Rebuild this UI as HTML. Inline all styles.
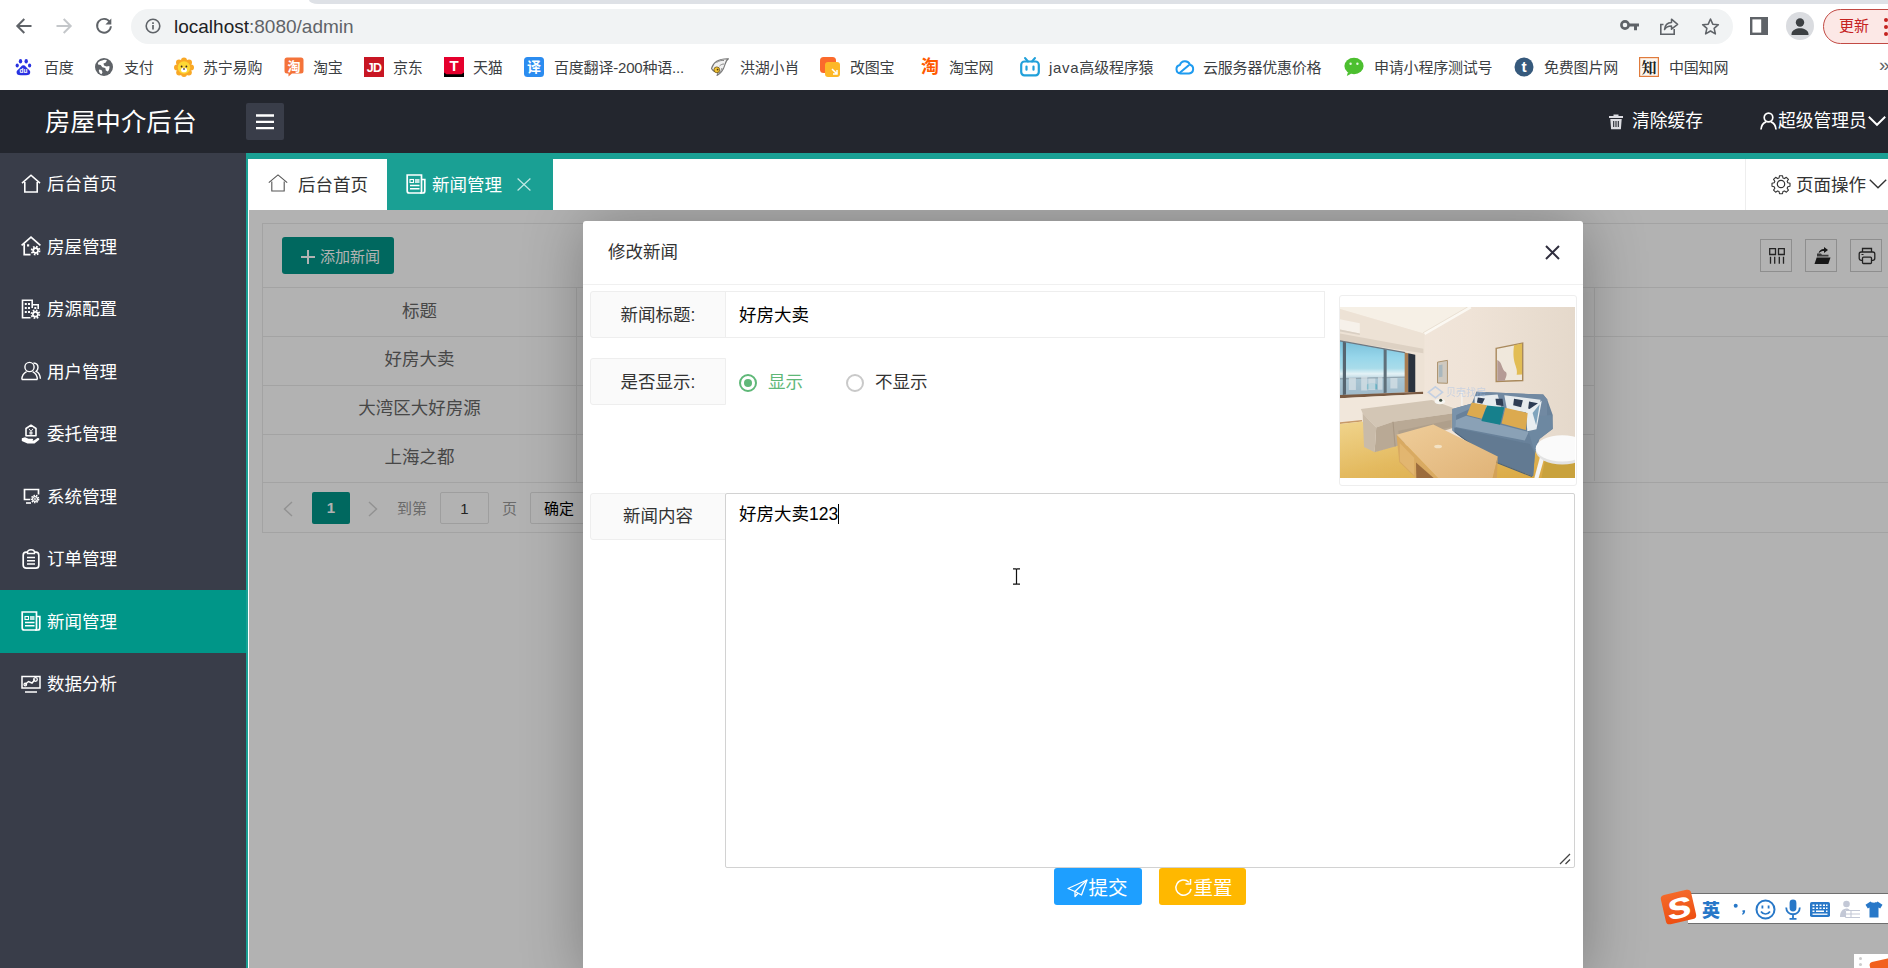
<!DOCTYPE html>
<html lang="zh-CN">
<head>
<meta charset="utf-8">
<title>房屋中介后台</title>
<style>
*{box-sizing:border-box;margin:0;padding:0}
html,body{width:1888px;height:968px;overflow:hidden;background:#fff}
body{position:relative;font-family:"Liberation Sans","Noto Sans CJK SC",sans-serif;font-size:17.5px;color:#333;line-height:1}
.abs{position:absolute}
svg{display:block;overflow:visible}
/* ---------- browser chrome ---------- */
#chrome{position:absolute;left:0;top:0;width:1888px;height:89px;background:#fff}
#tabstrip{position:absolute;left:309px;top:0;width:1579px;height:4px;background:#dee1e6;border-bottom-left-radius:9px 4px}
#urlbar{position:absolute;left:131px;top:9px;width:1602px;height:35px;border-radius:17.5px;background:#f1f3f4}
#url{position:absolute;left:174px;top:16.5px;font-size:19px;color:#202124;white-space:nowrap}
#url span{color:#5f6368}
.bm{position:absolute;top:59.7px;font-size:15px;color:#3c4043;white-space:nowrap;letter-spacing:-0.2px}
.bmi{position:absolute;top:56.7px;width:20px;height:20px}
#update{position:absolute;left:1823px;top:9px;width:90px;height:35px;border:1.5px solid #c24a44;border-radius:18px;background:#fce8e6;color:#c5221f;font-size:15px;padding:8px 0 0 15px}
/* ---------- app header ---------- */
#hdr{position:absolute;left:0;top:90px;width:1888px;height:62.5px;background:#23262e}
#logo{position:absolute;left:45px;top:19.5px;font-size:25.3px;color:#fff;white-space:nowrap}
#burger{position:absolute;left:246px;top:13px;width:38px;height:37px;background:#393d49;border-radius:2px}
.hr{position:absolute;top:23px;font-size:17.75px;color:#fff;white-space:nowrap}
/* ---------- sidebar ---------- */
#side{position:absolute;left:0;top:152.5px;width:246px;height:816px;background:#393d49}
.mi{position:absolute;left:0;width:246px;height:63px;color:#fff;font-size:17.5px}
.mi span{position:absolute;left:47px;top:23.5px;white-space:nowrap}
.mi svg{position:absolute;left:21px;top:21px;width:20px;height:20px}
.mi.on{background:#009688}
#tealv{position:absolute;left:246px;top:153px;width:2px;height:815px;background:#1aa094}
#tealh{position:absolute;left:246px;top:153px;width:1642px;height:6px;background:#1aa094}
/* ---------- tab bar ---------- */
#tabs{position:absolute;left:248px;top:159px;width:1640px;height:51px;background:#fff}
.tab{position:absolute;top:0;height:51px;font-size:17.5px;white-space:nowrap}
/* ---------- content ---------- */
#content{position:absolute;left:249px;top:210px;width:1639px;height:758px;background:#fff;overflow:hidden}
#card{position:absolute;left:13px;top:13px;width:1700px;height:310px;background:#fff;border:1px solid #eaeaea}
#shade{position:absolute;left:0;top:0;width:1640px;height:758px;background:rgba(0,0,0,.3)}
.hl{position:absolute;left:0;width:1700px;height:1px;background:#eaeaea}
.vl{position:absolute;width:1px;background:#eaeaea}
.tc{position:absolute;left:0;width:313px;text-align:center;font-size:17.5px;color:#666;white-space:nowrap}
.tb{position:absolute;top:15px;width:32px;height:33px;border:1px solid #ccc;padding:7px 6px 6px 7px}
/* ---------- modal ---------- */
#modal{position:absolute;left:334px;top:11px;width:1000px;height:760px;background:#fff;border-radius:3px;box-shadow:1px 1px 62px rgba(0,0,0,.3)}
#mtitle{position:absolute;left:0;top:0;width:1000px;height:64px;border-bottom:1px solid #f0f0f0;font-size:17.5px;color:#333;padding:22.5px 0 0 25px}
.lbl{position:absolute;left:7px;width:136px;height:47px;background:#fafafa;border:1px solid #eee;border-radius:3px 0 0 3px;font-size:17.5px;color:#333;text-align:center;padding-top:15px;white-space:nowrap}
.inp{position:absolute;border:1px solid #eee;background:#fff;font-size:17.5px;color:#000}
.btn{position:absolute;top:647px;height:37px;border-radius:3px;color:#fff;font-size:19.5px;white-space:nowrap}
</style>
</head>
<body>
<!-- ================= BROWSER CHROME ================= -->
<div id="chrome">
  <div id="tabstrip"></div>
  <div id="urlbar"></div>
  <!-- nav icons -->
  <svg class="abs" style="left:15px;top:16.600px" width="18" height="18" viewBox="0 0 18 18"><path d="M16.5 9H2.500M9.300 2L2.300 9l7 7" fill="none" stroke="#5f6368" stroke-width="2"/></svg>
  <svg class="abs" style="left:55px;top:16.600px" width="18" height="18" viewBox="0 0 18 18"><path d="M1.500 9h14M8.700 2L15.700 9l-7 7" fill="none" stroke="#c4c7ca" stroke-width="2"/></svg>
  <svg class="abs" style="left:94.500px;top:16.500px" width="18" height="18" viewBox="0 0 19 19"><path d="M15.6 5.2A7.3 7.3 0 1 0 16.8 9.8" fill="none" stroke="#5f6368" stroke-width="2"/><path d="M17.2 1.6v6.2H11z" fill="#5f6368"/></svg>
  <svg class="abs" style="left:145px;top:18px" width="16" height="16" viewBox="0 0 16 16"><circle cx="8" cy="8" r="6.8" fill="none" stroke="#5f6368" stroke-width="1.6"/><path d="M8 7v4.6M8 4.2v1.7" stroke="#5f6368" stroke-width="1.7"/></svg>
  <div id="url">localhost<span>:8080/admin</span></div>
  <!-- right icons -->
  <svg class="abs" style="left:1620px;top:19px" width="20" height="14" viewBox="0 0 20 14"><circle cx="5" cy="6" r="3.6" fill="none" stroke="#5f6368" stroke-width="2.6"/><path d="M8 4.6h11v3H17v3.6h-3V7.600H8z" fill="#5f6368"/></svg>
  <svg class="abs" style="left:1659px;top:16px" width="20" height="20" viewBox="0 0 20 20"><path d="M4.500 8.500H1.800V18.200H15.200V13" fill="none" stroke="#5f6368" stroke-width="1.6"/><path d="M5.500 13.500C6 9 9 6.800 12.500 6.600V3.200L18.600 8.300 12.500 13.200V9.900C9.500 9.900 7 11 5.500 13.500z" fill="none" stroke="#5f6368" stroke-width="1.500" stroke-linejoin="round"/></svg>
  <svg class="abs" style="left:1700.5px;top:16.5px" width="19" height="19" viewBox="0 0 21 21"><path d="M10.500 2.200l2.500 5.700 6.200.6-4.700 4.100 1.400 6.100-5.400-3.200-5.400 3.200 1.400-6.100L1.800 8.500l6.200-.6z" fill="none" stroke="#5f6368" stroke-width="1.700" stroke-linejoin="round"/></svg>
  <svg class="abs" style="left:1750px;top:17px" width="18" height="18" viewBox="0 0 18 18"><rect x="1.200" y="1.200" width="15.600" height="15.600" fill="none" stroke="#5f6368" stroke-width="2.400"/><rect x="11.200" y="1" width="6" height="16" fill="#5f6368"/></svg>
  <div class="abs" style="left:1786px;top:12px;width:28px;height:28px;border-radius:14px;background:#dadce0;overflow:hidden"><svg width="28" height="28" viewBox="0 0 28 28"><circle cx="14" cy="10.500" r="4.200" fill="#3c4043"/><path d="M5.500 22c0-4 5-5.800 8.500-5.800s8.500 1.800 8.500 5.800v1h-17z" fill="#3c4043"/></svg></div>
  <div id="update">更新</div>
  <div class="abs" style="left:1884px;top:18px;width:4px;height:4px;border-radius:2px;background:#c5221f;box-shadow:0 7px 0 #c5221f,0 14px 0 #c5221f"></div>
  <!-- bookmarks -->
  <svg class="bmi" style="left:14px" viewBox="0 0 20 20"><g fill="#2932e1"><ellipse cx="6.500" cy="4.200" rx="1.700" ry="2.300"/><ellipse cx="12.200" cy="4.200" rx="1.700" ry="2.300"/><ellipse cx="3.200" cy="8.500" rx="1.600" ry="2.100"/><ellipse cx="15.600" cy="8.500" rx="1.600" ry="2.100"/><path d="M9.400 8.200c2 0 2.600 2 4.300 3.500 1.800 1.500 3 2.400 2.400 4.500-.6 2-2.800 2-6.700 2s-6.200 0-6.700-2c-.6-2.100.7-3 2.400-4.500C6.800 10.200 7.400 8.200 9.400 8.200z"/></g><text x="9.400" y="16.400" font-size="6.500" font-weight="bold" fill="#fff" text-anchor="middle">du</text></svg>
  <div class="bm" style="left:44px">百度</div>
  <svg class="bmi" style="left:94px" viewBox="0 0 20 20"><circle cx="10" cy="10" r="9" fill="#5f6368"/><path d="M8 3.500c2-1 4-1 5 0l-1.500 2.200-2 .8.500 2 2.500 1 2.800-.4c.5 1.500 0 4-1.500 5.500l-2-1-.5-2.500-3-.8-1.600-2.200-2.600-.6C3.200 5.600 5.500 4 8 3.500z" fill="#fff"/><path d="M5 12.500l2.500.5 1 2.200-1 2C5.500 16.500 4.500 14.500 5 12.500z" fill="#fff"/></svg>
  <div class="bm" style="left:124px">支付</div>
  <svg class="bmi" style="left:174px" viewBox="0 0 20 20"><g fill="#f9a825"><circle cx="10" cy="3.600" r="3"/><circle cx="15" cy="5.600" r="3"/><circle cx="5" cy="5.600" r="3"/><circle cx="17" cy="10.500" r="3"/><circle cx="3" cy="10.500" r="3"/><circle cx="14.800" cy="15.500" r="3"/><circle cx="5.200" cy="15.500" r="3"/><circle cx="10" cy="17" r="3"/></g><circle cx="10" cy="10.500" r="6.200" fill="#fdd835"/><ellipse cx="10" cy="13" rx="3" ry="2.300" fill="#fff"/><circle cx="7.600" cy="9.500" r=".9" fill="#3e2723"/><circle cx="12.400" cy="9.500" r=".9" fill="#3e2723"/><ellipse cx="10" cy="12" rx="1.100" ry=".8" fill="#3e2723"/></svg>
  <div class="bm" style="left:203px">苏宁易购</div>
  <svg class="bmi" style="left:284px" viewBox="0 0 20 20"><path d="M3 0.500h14a2.500 2.500 0 0 1 2.500 2.500v11a2.500 2.500 0 0 1-2.500 2.500H8l-3.500 3v-3H3A2.500 2.500 0 0 1 .5 14V3A2.500 2.500 0 0 1 3 .5z" fill="#f4733a"/><text x="10" y="13.600" font-size="13" font-weight="bold" fill="#fff" text-anchor="middle">淘</text></svg>
  <div class="bm" style="left:313px">淘宝</div>
  <svg class="bmi" style="left:364px" viewBox="0 0 20 20"><rect width="20" height="20" fill="#c81623"/><text x="10" y="15" font-size="12.500" font-weight="bold" fill="#fff" text-anchor="middle" letter-spacing="-0.8">JD</text></svg>
  <div class="bm" style="left:393px">京东</div>
  <svg class="bmi" style="left:444px" viewBox="0 0 20 20"><rect width="20" height="20" fill="#e5002d"/><path d="M0 15.500l2.500 1.800h15L20 15.500V20H0z" fill="#000"/><text x="10" y="14.200" font-size="15" font-weight="bold" fill="#fff" text-anchor="middle">T</text></svg>
  <div class="bm" style="left:473px">天猫</div>
  <svg class="bmi" style="left:524px" viewBox="0 0 20 20"><rect width="20" height="20" rx="3.500" fill="#2b8cf0"/><text x="10" y="15" font-size="14" font-weight="bold" fill="#fff" text-anchor="middle">译</text></svg>
  <div class="bm" style="left:554px">百度翻译-200种语...</div>
  <svg class="bmi" style="left:710px" viewBox="0 0 20 20"><path d="M1.500 11.500C3 6 8 1.500 18.500 1.800c-2.500 1.500-3 3.700-3.800 6.500-1 3.500-3.200 7.500-7.700 10.200 1-2 1.200-3 .8-4-2.300.6-4.800-.3-6.300-3z" fill="#f1f1f1" stroke="#777" stroke-width="1.100" stroke-linejoin="round"/><path d="M6.500 5.500c2.200-1.700 5-2.300 7.500-2M9.500 9c1.500-1.500 3-2 4.500-2M12 11c-.5 2-1.500 3.500-3 5" fill="none" stroke="#888" stroke-width="1"/><circle cx="6.800" cy="12.800" r="2.900" fill="#f3c331" stroke="#6b5316" stroke-width=".8"/><circle cx="7.600" cy="12.600" r=".9" fill="#4a3a10"/></svg>
  <div class="bm" style="left:740px">洪湖小肖</div>
  <svg class="bmi" style="left:820px" viewBox="0 0 20 20"><rect x="0" y="0" width="16" height="16" rx="3.500" fill="#fb6a2c"/><rect x="5" y="5" width="15" height="15" rx="3" fill="#fdb827"/><path d="M12 12l5 5M17 13v4h-4" fill="none" stroke="#fff" stroke-width="1.500"/></svg>
  <div class="bm" style="left:850px">改图宝</div>
  <svg class="bmi" style="left:920px" viewBox="0 0 20 20"><text x="10" y="16" font-size="18" font-weight="bold" fill="#ff5a00" text-anchor="middle">淘</text></svg>
  <div class="bm" style="left:949px">淘宝网</div>
  <svg class="bmi" style="left:1020px" viewBox="0 0 20 20"><path d="M5 1l3 3.500M15 1l-3 3.500" stroke="#20a0da" stroke-width="2" stroke-linecap="round"/><rect x="1.200" y="4.500" width="17.600" height="13.800" rx="3.200" fill="none" stroke="#20a0da" stroke-width="2.200"/><path d="M6.500 9.500v3.200M13.500 9.500v3.200" stroke="#20a0da" stroke-width="2.200" stroke-linecap="round"/></svg>
  <div class="bm" style="left:1049px"><span style="letter-spacing:.7px">java</span>高级程序猿</div>
  <svg class="bmi" style="left:1174px" viewBox="0 0 20 20"><path d="M6.500 16.500a4.300 4.300 0 0 1-.6-8.500 5.300 5.300 0 0 1 10-.3 4.500 4.500 0 0 1-.8 8.800z" fill="none" stroke="#1e9bf0" stroke-width="2" stroke-linejoin="round"/><path d="M5.500 16l9-7.500" stroke="#1e9bf0" stroke-width="2" stroke-linecap="round"/></svg>
  <div class="bm" style="left:1203px">云服务器优惠价格</div>
  <svg class="bmi" style="left:1344px" viewBox="0 0 20 20"><ellipse cx="10" cy="9" rx="9.600" ry="8.300" fill="#4cbf2f"/><path d="M4 15l-1.200 4 4.700-2.500z" fill="#4cbf2f"/><circle cx="6.600" cy="6.800" r="1.200" fill="#fff" opacity=".85"/><circle cx="13.400" cy="6.800" r="1.200" fill="#fff" opacity=".85"/></svg>
  <div class="bm" style="left:1374px">申请小程序测试号</div>
  <svg class="bmi" style="left:1514px" viewBox="0 0 20 20"><circle cx="10" cy="10" r="9.500" fill="#36597c"/><text x="10" y="15.300" font-size="15.500" font-weight="bold" fill="#fff" text-anchor="middle">t</text></svg>
  <div class="bm" style="left:1544px">免费图片网</div>
  <svg class="bmi" style="left:1639px" viewBox="0 0 20 20"><rect x=".6" y=".6" width="18.800" height="18.800" fill="#fdf7ef" stroke="#e07b3c" stroke-width="1.200"/><text x="10" y="15.600" font-size="15" font-weight="bold" fill="#222" text-anchor="middle" font-family="'Liberation Serif','Noto Serif CJK SC',serif">知</text></svg>
  <div class="bm" style="left:1669px">中国知网</div>
  <div class="bm" style="left:1879px;top:55px;font-size:19px;color:#5f6368">»</div>
</div>

<!-- ================= APP HEADER ================= -->
<div id="hdr">
  <div id="logo">房屋中介后台</div>
  <div id="burger"><svg style="position:absolute;left:10px;top:11px" width="18" height="16" viewBox="0 0 18 16"><path d="M0 1.500h18M0 7.800h18M0 14.200h18" stroke="#fff" stroke-width="2.300"/></svg></div>
  <svg class="abs" style="left:1608px;top:24px" width="16" height="16" viewBox="0 0 16 16"><path d="M5.500 0.500h5v1.500h-5zM1 2h14v2H1zM2.300 5h11.400l-.8 10.300H3.100z" fill="#dcdce2"/><path d="M5.700 7v6M8 7v6M10.300 7v6" stroke="#23262e" stroke-width="1.100"/></svg>
  <div class="hr" style="left:1632px">清除缓存</div>
  <svg class="abs" style="left:1760px;top:22px" width="17" height="18" viewBox="0 0 17 18"><circle cx="8.500" cy="5.500" r="4.300" fill="none" stroke="#fff" stroke-width="1.700"/><path d="M1 17.500c.3-4 2.500-6.700 5-7.600M16 17.500c-.3-4-2.500-6.700-5-7.600" fill="none" stroke="#fff" stroke-width="1.700"/></svg>
  <div class="hr" style="left:1778px">超级管理员</div>
  <svg class="abs" style="left:1868px;top:25.5px" width="18" height="10" viewBox="0 0 18 10"><path d="M.8 .8l8.200 8 8.200-8" fill="none" stroke="#fff" stroke-width="1.900"/></svg>
</div>

<!-- ================= SIDEBAR ================= -->
<div id="side">
  <div class="mi" style="top:0.0px"><svg viewBox="0 0 20 20"><path d="M1 9.200L10 1.200l9 8" stroke="#fff" fill="none" stroke-width="1.600"/><path d="M3.800 8v10h12.400V8" stroke="#fff" fill="none" stroke-width="1.600"/></svg><span>后台首页</span></div>
  <div class="mi" style="top:62.5px"><svg viewBox="0 0 20 20"><path d="M.6 9.300L10 1.200l9.400 8.100" stroke="#fff" fill="none" stroke-width="1.700"/><path d="M3.200 7.800V18.600H9.500" stroke="#fff" fill="none" stroke-width="1.700"/><rect x="6" y="8.300" width="2.200" height="2.200" fill="#fff"/><g transform="translate(14.6 14.6)"><circle r="3.300" fill="#fff"/><circle r="3.900" fill="none" stroke="#fff" stroke-width="1.900" stroke-dasharray="1.600 1.463"/><circle r="1.500" fill="#393d49"/></g></svg><span>房屋管理</span></div>
  <div class="mi" style="top:125.0px"><svg viewBox="0 0 20 20"><path d="M9.500 18.800H1.500V1.200H11.200V9" stroke="#fff" fill="none" stroke-width="1.600"/><path d="M11.200 5.800H17.200V10" stroke="#fff" fill="none" stroke-width="1.600"/><path d="M3.800 4h2v2h-2zM7 4h2v2H7zM3.800 8h2v2h-2zM7 8h2v2H7zM3.800 12h2v2h-2zM7 12h2v2H7zM13.300 8h2v2h-2z" fill="#fff"/><g transform="translate(14.4 15.2)"><circle r="3.300" fill="#fff"/><circle r="3.900" fill="none" stroke="#fff" stroke-width="1.900" stroke-dasharray="1.600 1.463"/><circle r="1.500" fill="#393d49"/></g></svg><span>房源配置</span></div>
  <div class="mi" style="top:187.5px"><svg viewBox="0 0 20 20"><circle cx="8.500" cy="6" r="4.600" stroke="#fff" fill="none" stroke-width="1.400"/><path d="M.8 18.500c.2-4 2.200-6.500 4.800-7.800M16.400 18.500c-.2-4-2.200-6.500-4.800-7.800M.8 18.500h15.600" stroke="#fff" fill="none" stroke-width="1.400"/><path d="M12.500 2c2.800.2 4.500 2.200 4.500 4.500 0 1.800-.8 3-1.800 3.800 2.500 1.200 4 4 4.200 7.500" stroke="#fff" fill="none" stroke-width="1.400"/></svg><span>用户管理</span></div>
  <div class="mi" style="top:250.0px"><svg viewBox="0 0 20 20"><path d="M10 1.200l5 3.300v7.200H5V4.500z" fill="none" stroke="#fff" stroke-width="1.600" stroke-linejoin="round"/><path d="M8 4.800l2 2.600 2-2.600M10 7.400v3.400M8.300 8.300h3.400M8.300 9.800h3.400" fill="none" stroke="#fff" stroke-width=".9"/><path d="M.8 14.200l3.200-1 3.500 1.600h3.800c1.200 0 1.200 1.600 0 1.600H8.500h4.300l3.700-2.300c1.300-.6 2.700.9 1.400 1.900L13.500 19.600H6.500L.8 17z" fill="#fff"/></svg><span>委托管理</span></div>
  <div class="mi" style="top:312.5px"><svg viewBox="0 0 20 20"><path d="M9 13.500H3.500V3.500h14v5" stroke="#fff" fill="none" stroke-width="1.700"/><path d="M5 17h5" stroke="#fff" fill="none" stroke-width="1.600"/><circle cx="14" cy="13" r="3.600" fill="none" stroke="#fff" stroke-width="1.500" stroke-dasharray="1.500 1.000"/><circle cx="14" cy="13" r="2.400" stroke="#fff" fill="none" stroke-width="1.200"/><circle cx="14" cy="13" r=".9" fill="#fff"/></svg><span>系统管理</span></div>
  <div class="mi" style="top:375.0px"><svg viewBox="0 0 20 20"><rect x="2.200" y="3.200" width="15.600" height="16" rx="3" stroke="#fff" fill="none" stroke-width="1.700"/><path d="M6.500 3.500c0-1.500 1-2.700 3.500-2.700s3.500 1.200 3.500 2.700v1h-7z" fill="#393d49" stroke="#fff" stroke-width="1.400"/><path d="M6 8.500h8M6 11.800h8M6 15h8" stroke="#fff" fill="none" stroke-width="1.500"/></svg><span>订单管理</span></div>
  <div class="mi on" style="top:437.5px"><svg viewBox="0 0 20 20"><path d="M1.200 1h14.300v18H3.200a2 2 0 0 1-2-2z" stroke="#fff" fill="none" stroke-width="1.700"/><path d="M15.500 5.500H18.800V17a2 2 0 0 1-2 2H14" stroke="#fff" fill="none" stroke-width="1.700"/><rect x="4" y="5.500" width="3.500" height="3" stroke="#fff" fill="none" stroke-width="1.100"/><path d="M9 6h4.500M9 8h4.500M4 11.500h9.500M4 14.800h9.500" stroke="#fff" fill="none" stroke-width="1.600"/></svg><span>新闻管理</span></div>
  <div class="mi" style="top:500.0px"><svg viewBox="0 0 20 20"><path d="M1 2.500h18v11.500H1z" stroke="#fff" fill="none" stroke-width="1.500"/><path d="M4 18h12M4 10.500l3.500-3 3.500 1.500 3-3.500" stroke="#fff" fill="none" stroke-width="1.500"/><circle cx="14.500" cy="5.500" r="1.800" stroke="#fff" fill="none" stroke-width="1.300"/><circle cx="4.300" cy="10.500" r="1.300" stroke="#fff" fill="none" stroke-width="1.200"/></svg><span>数据分析</span></div>
</div>
<div id="tealh"></div>
<div id="tealv"></div>

<!-- ================= TAB BAR ================= -->
<div id="tabs">
  <svg class="abs" style="left:20px;top:15px" width="20" height="18" viewBox="0 0 20 18"><path d="M.8 8.600L10 .9l9.200 7.700" fill="none" stroke="#555" stroke-width="1.100"/><path d="M3.800 7.500V17h12.400V7.500" fill="none" stroke="#555" stroke-width="1.100"/></svg>
  <div class="tab" style="left:50px;top:18px;color:#333">后台首页</div>
  <div class="abs" style="left:139px;top:0;width:166px;height:51px;background:#1aa094"></div>
  <svg class="abs" style="left:158px;top:15px" width="20" height="20" viewBox="0 0 20 20"><path d="M1.200 1h14.300v18H3.200a2 2 0 0 1-2-2z" fill="none" stroke="#fff" stroke-width="1.700"/><path d="M15.500 5.500H18.800V17a2 2 0 0 1-2 2H14" fill="none" stroke="#fff" stroke-width="1.700"/><rect x="4" y="5.500" width="3.500" height="3" fill="none" stroke="#fff" stroke-width="1.100"/><path d="M9 6h4.500M9 8h4.500M4 11.500h9.500M4 14.800h9.500" fill="none" stroke="#fff" stroke-width="1.600"/></svg>
  <div class="tab" style="left:184px;top:18px;color:#fff">新闻管理</div>
  <svg class="abs" style="left:269px;top:19px" width="14" height="13" viewBox="0 0 14 13"><path d="M.6 .5l12.800 12M13.400 .5L.6 12.500" stroke="#bfe8e3" stroke-width="1.200"/></svg>
  <div class="abs" style="left:1497px;top:0;width:1px;height:51px;background:#eee"></div>
  <svg class="abs" style="left:1523px;top:15px" width="20" height="20" viewBox="0 0 20 20"><circle cx="10" cy="10" r="3.700" fill="none" stroke="#333" stroke-width="1.200"/><path d="M8.400 1h3.200l.5 2.400 1.700.7 2-1.400 2.300 2.300-1.400 2 .7 1.700 2.400.5v3.200l-2.400.5-.7 1.700 1.400 2-2.300 2.300-2-1.400-1.700.7-.5 2.400H8.400l-.5-2.400-1.700-.7-2 1.400-2.300-2.300 1.400-2-.7-1.700L.2 12.400V9.200l2.400-.5.7-1.700-1.400-2 2.300-2.300 2 1.400 1.700-.7z" fill="none" stroke="#333" stroke-width="1.200" stroke-linejoin="round" transform="translate(.8 .8) scale(.92)"/></svg>
  <div class="tab" style="left:1548px;top:18px;color:#333">页面操作</div>
  <svg class="abs" style="left:1621px;top:20px" width="18" height="10" viewBox="0 0 18 10"><path d="M.8 .8l8.200 8 8.200-8" fill="none" stroke="#333" stroke-width="1.400"/></svg>
</div>

<!-- ================= CONTENT (shaded) ================= -->
<div id="content">
  <!-- underlying page (true colours, shaded by overlay) -->
  <div id="card">
    <div class="abs" style="left:19px;top:13px;width:112px;height:37px;background:#009688;border-radius:3px"></div>
    <svg class="abs" style="left:38px;top:26px" width="14" height="14" viewBox="0 0 14 14"><path d="M7 0v14M0 7h14" stroke="#fff" stroke-width="2"/></svg>
    <div class="abs" style="left:57px;top:25px;font-size:15px;color:#fff;white-space:nowrap">添加新闻</div>
    <div class="tb" style="left:1497px"><svg width="18" height="18" viewBox="0 0 18 18"><path d="M1.700 1.700h5.800v5.800H1.700zM10.500 1.700h5.800v5.800h-5.800z" fill="none" stroke="#333" stroke-width="1.300"/><path d="M2.500 9.800v7M6.700 9.800v7M11.300 9.800v7M15.500 9.800v7" stroke="#333" stroke-width="1.300"/></svg></div>
    <div class="tb" style="left:1542px"><svg width="18" height="18" viewBox="0 0 18 18"><path d="M1.500 17l2.200-6.500h13.800L15.300 17z" fill="#222"/><path d="M4 9.500V6.500h4l1 1.200h6.500V9.500z" fill="#555"/><path d="M5.500 6.500c.5-3 2.500-4.500 5.500-4.500V0l4 3-4 3V4c-2 0-3.500.5-5.500 2.500z" fill="#222"/></svg></div>
    <div class="tb" style="left:1587px"><svg width="18" height="18" viewBox="0 0 18 18"><path d="M4.500 5V1.500h9V5" fill="none" stroke="#333" stroke-width="1.300"/><rect x="1.200" y="5" width="15.600" height="8.300" rx="2" fill="none" stroke="#333" stroke-width="1.300"/><rect x="4.500" y="10.200" width="9" height="6.300" rx="1" fill="#fff" stroke="#333" stroke-width="1.300"/><path d="M3.500 7.500h2" stroke="#333" stroke-width="1"/></svg></div>
    <div class="hl" style="top:63px"></div>
    <div class="hl" style="top:112px"></div>
    <div class="hl" style="top:161px;width:1331px"></div>
    <div class="hl" style="top:210px;width:1331px"></div>
    <div class="hl" style="top:258px"></div>
    <div class="vl" style="left:313px;top:64px;height:194px"></div>
    <div class="vl" style="left:1331px;top:64px;height:193px"></div>
    <div class="tc" style="top:79px">标题</div>
    <div class="tc" style="top:127px">好房大卖</div>
    <div class="tc" style="top:176px">大湾区大好房源</div>
    <div class="tc" style="top:225px">上海之都</div>
    <!-- pagination -->
    <svg class="abs" style="left:20px;top:277px" width="10" height="16" viewBox="0 0 10 16"><path d="M9 1L1.500 8 9 15" fill="none" stroke="#d2d2d2" stroke-width="1.500"/></svg>
    <div class="abs" style="left:49px;top:268px;width:38px;height:32px;background:#009688;border-radius:2px;color:#fff;font-size:15px;text-align:center;padding-top:8px;font-weight:bold">1</div>
    <svg class="abs" style="left:105px;top:277px" width="10" height="16" viewBox="0 0 10 16"><path d="M1 1l7.500 7L1 15" fill="none" stroke="#d2d2d2" stroke-width="1.500"/></svg>
    <div class="abs" style="left:134px;top:277px;font-size:15px;color:#999;white-space:nowrap">到第</div>
    <div class="abs" style="left:177px;top:268px;width:49px;height:32px;border:1px solid #e2e2e2;border-radius:2px;font-size:15px;color:#333;text-align:center;padding-top:8px">1</div>
    <div class="abs" style="left:239px;top:277px;font-size:15px;color:#999">页</div>
    <div class="abs" style="left:267px;top:268px;width:58px;height:32px;border:1px solid #e2e2e2;border-radius:2px;font-size:15px;color:#000;padding:8px 0 0 13px;white-space:nowrap">确定</div>
  </div>
  <div id="shade"></div>
  <div id="modal">
    <div id="mtitle">修改新闻</div>
    <svg class="abs" style="left:962px;top:24px" width="15" height="15" viewBox="0 0 15 15"><path d="M1 1l13 13M14 1L1 14" stroke="#2f2e3e" stroke-width="2"/></svg>
    <!-- row 1 -->
    <div class="lbl" style="top:70px">新闻标题:</div>
    <div class="inp" style="left:142px;top:70px;width:600px;height:47px;padding:15px 0 0 13px">好房大卖</div>
    <!-- row 2 -->
    <div class="lbl" style="top:137px">是否显示:</div>
    <div class="abs" style="left:156px;top:152.500px;width:18px;height:18px;border-radius:9px;border:2px solid #5fb878"></div>
    <div class="abs" style="left:161px;top:157.500px;width:8px;height:8px;border-radius:4px;background:#5fb878"></div>
    <div class="abs" style="left:185px;top:153px;font-size:17.500px;color:#5fb878;white-space:nowrap">显示</div>
    <div class="abs" style="left:263px;top:152.500px;width:18px;height:18px;border-radius:9px;border:2px solid #c9c9c9"></div>
    <div class="abs" style="left:292px;top:153px;font-size:17.500px;color:#333;white-space:nowrap">不显示</div>
    <!-- image -->
    <div class="abs" style="left:756px;top:74px;width:238px;height:191px;border:1px solid #eee;border-radius:3px"></div>
    <svg class="abs" style="left:757px;top:86px" width="235" height="171" viewBox="0 0 1330 968" preserveAspectRatio="none">
      <defs>
        <linearGradient id="gw" x1="0" x2="1" y1="0" y2="0"><stop offset="0" stop-color="#f3e9de"/><stop offset=".55" stop-color="#efe3d7"/><stop offset="1" stop-color="#e4d8ca"/></linearGradient>
        <linearGradient id="gs" x1="0" x2="0" y1="0" y2="1"><stop offset="0" stop-color="#79bfd9"/><stop offset=".3" stop-color="#97d6ea"/><stop offset=".5" stop-color="#a9dcea"/><stop offset=".6" stop-color="#e4f2f6"/><stop offset=".7" stop-color="#b4d0dd"/><stop offset="1" stop-color="#a3bccb"/></linearGradient>
        <linearGradient id="gf" x1="0" x2="1" y1="0" y2="1"><stop offset="0" stop-color="#f0d48c"/><stop offset=".5" stop-color="#e3b95e"/><stop offset="1" stop-color="#d8a640"/></linearGradient>
        <linearGradient id="gt" x1="0" x2="1" y1="0" y2="1"><stop offset="0" stop-color="#efcd9a"/><stop offset="1" stop-color="#e0b377"/></linearGradient>
        <clipPath id="cp"><rect width="1330" height="968"/></clipPath>
        <filter id="bl" x="-5%" y="-5%" width="110%" height="110%"><feGaussianBlur stdDeviation="4.2"/></filter>
      </defs>
      <g clip-path="url(#cp)"><g filter="url(#bl)">
      <rect x="-40" y="-40" width="1410" height="1048" fill="url(#gw)"/>
      <!-- ceiling -->
      <path d="M0 0H740L478 152 0 12z" fill="#f6f0e6"/>
      <path d="M740 0L478 152" stroke="#fbf8f2" stroke-width="16"/>
      <path d="M722 0L470 146" stroke="#e4d9cb" stroke-width="4"/>
      <!-- left wall -->
      <path d="M0 12L478 152V500L0 520z" fill="#ede2d5"/>
      <path d="M0 70l112 22v58L0 128z" fill="#f6f1ea"/><path d="M0 128l112 22v8L0 138z" fill="#d9cfc3"/>
      <path d="M0 150L472 236v26L0 192z" fill="#ddd1c3"/>
      <!-- window -->
      <path d="M0 192L368 258V482L0 502z" fill="url(#gs)"/>
      <path d="M0 405l368-8v85L0 502z" fill="#9ab6c6" opacity=".45"/><path d="M0 402l368-8v7L0 410z" fill="#8b9ca8" opacity=".8"/><path d="M150 440c20-15 50-12 60 0v25h-60z" fill="#4fa9bd" opacity=".7"/>
      <path d="M50 400h40v70H50zM120 392h35v80h-35zM160 405h40v65h-40zM215 398h25v70h-25zM285 402h40v60h-40z" fill="#d5e0e6" opacity=".75"/>
      <path d="M16 196l18 4v296l-18 2z" fill="#56656f"/><path d="M247 238l17 4v244l-17 1z" fill="#5f6f7a"/>
      <path d="M0 192L368 258" stroke="#6d7780" stroke-width="8"/>
      <!-- curtain -->
      <path d="M366 258l20 4v220h-20z" fill="#a97d51"/><path d="M386 262l40 8v212h-40z" fill="#2b313d"/>
      <!-- sill -->
      <path d="M0 498L470 480v12L0 516z" fill="#7a5a43"/>
      <path d="M0 516L470 492 640 565V640L0 660z" fill="#f1e7db"/>
      <path d="M0 652l125-12v8L0 662z" fill="#c89a68"/>
      <!-- floor -->
      <path d="M0 662l128-14 70 172 130-40 560 70 442-90V968H0z" fill="url(#gf)"/>
      <!-- bed -->
      <path d="M118 578L520 526l122 46v30L300 650 205 682 128 602z" fill="#d3c6b5"/>
      <path d="M205 682l95-32 342-48v82L312 790l-116 32z" fill="#b9a995"/>
      <path d="M128 602l77 80-9 140-60-30z" fill="#c9bba9"/>
      <path d="M300 650l12 140" stroke="#a89783" stroke-width="6"/>
      <path d="M330 700l300-60v40L335 750z" fill="#a99a86" opacity=".6"/>
      <!-- plant + lamp pole -->
      <path d="M690 470v90" stroke="#f4f4f2" stroke-width="7"/>
      <ellipse cx="565" cy="535" rx="30" ry="16" fill="#f6f5f1"/><circle cx="570" cy="528" r="9" fill="#3b4a3c"/>
      <!-- paintings -->
      <path d="M552 312l56-10v130l-56-2z" fill="#cfc9bf" stroke="#a58a62" stroke-width="5"/><path d="M560 330l20-5v70l-20 3z" fill="#a9b7bd"/>
      <path d="M884 234l150-30v212l-150 6z" fill="#f0e8dc" stroke="#a9895c" stroke-width="8"/>
      <path d="M985 216l45-9v175l-30 2c10-50-30-60-15-168z" fill="#e2bd55"/>
      <path d="M890 300c30 10 20 50 50 70 10 20-10 40-5 48l-45 1z" fill="#b59b95"/>
      <!-- sofa -->
      <path d="M636 578L746 546 772 480 1150 496 1172 522 1204 612V690L1130 745 1103 830 1093 958 881 876 636 700z" fill="#68819a"/>
      <path d="M772 480L1150 496l22 26v130L760 565z" fill="#7189a2"/>
      <path d="M636 578l110-32 16 18-104 48-4 96-18-12z" fill="#7a93ab"/>
      <path d="M656 640l58-24 354 92-22 48-393-76z" fill="#8aa1b6"/>
      <path d="M647 682l428 94 28 54-10 128-212-82-234-170z" fill="#627a92"/>
      <path d="M650 708l225 168 212 84" stroke="#4c6278" stroke-width="6" fill="none"/>
      <path d="M1068 709l54-92 76-6 6 78-88 70-12 70z" fill="#6d88a1"/>
      <!-- pillows -->
      <path d="M762 505l130-10 20 70-150 10z" fill="#e6ebee"/><path d="M930 500l205 25-20 80-170-25z" fill="#e6ebee"/>
      <path d="M780 512l40 6-15 30-30-8zM880 520l40 0 5 40-40-5zM985 520l50 8-10 40-45-12zM1070 535l50 10-15 45-40-15z" fill="#2d3e55"/>
      <path d="M1052 592l50-34 40-28-30 162-52 12z" fill="#e9eef1"/><path d="M1090 600l40-50-20 120z" fill="#7fa4bd"/>
      <path d="M746 540l86 16-30 76-84-20z" fill="#dcaa50"/>
      <path d="M832 558l98 10-24 98-106-20z" fill="#17808c"/>
      <path d="M936 570l126 30-10 96-138-36z" fill="#dcaa50"/>
      <!-- coffee table -->
      <path d="M320 723l208-58 365 181-29 122H554z" fill="url(#gt)"/>
      <path d="M320 723l234 245H428l-93-90z" fill="#d9aa62"/>
      <path d="M338 770l82 84v98l-80-78z" fill="#e2b670"/>
      <path d="M430 880l100 88H432z" fill="#9c6c3e"/>
      <path d="M893 846l-5 122h-24z" fill="#d3a159"/>
      <ellipse cx="555" cy="790" rx="22" ry="10" fill="#f3e2c4"/>
      <!-- side table -->
      <path d="M1160 865h170v103h-190z" fill="#c9a23e"/>
      <path d="M1145 800l-45 168h24l45-160z" fill="#f4f4f4"/>
      <ellipse cx="1258" cy="812" rx="150" ry="80" fill="#e3e3e3"/>
      <ellipse cx="1258" cy="800" rx="150" ry="74" fill="#fafafa"/>
      </g>
      <!-- watermark -->
      <path d="M540 452l40 30-40 32-40-32z" fill="none" stroke="#9dbdea" stroke-width="9" opacity=".55"/>
      <text x="600" y="503" font-size="57" fill="#9dbdea" opacity=".45" font-family="'Liberation Sans','Noto Sans CJK SC',sans-serif">贝壳找房</text>
      </g>
    </svg>
    <!-- row 3 -->
    <div class="lbl" style="top:272px;padding-top:13.5px">新闻内容</div>
    <div class="inp" style="left:142px;top:272px;width:850px;height:375px;border-color:#d2d2d2;border-radius:2px;padding:12px 0 0 13px">好房大卖123</div>
    <div class="abs" style="left:255px;top:283px;width:1px;height:20px;background:#000"></div>
    <svg class="abs" style="left:976px;top:632px" width="12" height="12" viewBox="0 0 12 12"><path d="M11 1L1 11M11 6.500L6.500 11" stroke="#444" stroke-width="1.300"/></svg>
    <!-- I-beam mouse cursor -->
    <svg class="abs" style="left:429px;top:346.500px" width="9" height="17" viewBox="0 0 9 19" preserveAspectRatio="none"><path d="M1 1h2.500c.6 0 1 .4 1 1 0-.6.400-1 1-1H8M1 18h2.500c.6 0 1-.4 1-1 0 .6.400 1 1 1H8M4.500 2v15" fill="none" stroke="#111" stroke-width="1.200"/></svg>
    <!-- buttons -->
    <div class="btn" style="left:471px;width:88px;background:#1e9fff"><svg class="abs" style="left:13px;top:10.5px" width="21" height="18" viewBox="0 0 21 18"><path d="M1 9.500L20 1 14.500 16 8 12.500z" fill="none" stroke="#fff" stroke-width="1.300" stroke-linejoin="round"/><path d="M20 1L8 12.500V17.500l3-3.300" fill="none" stroke="#fff" stroke-width="1.300" stroke-linejoin="round"/></svg><span style="position:absolute;left:34.5px;top:11px">提交</span></div>
    <div class="btn" style="left:576px;width:87px;background:#ffb800"><svg class="abs" style="left:15px;top:9.5px" width="19" height="19" viewBox="0 0 19 19"><path d="M14.800 4.200A7.600 7.600 0 1 0 17 10.800" fill="none" stroke="#fff" stroke-width="1.500"/><path d="M16.500 1v5h-5" fill="none" stroke="#fff" stroke-width="1.500"/></svg><span style="position:absolute;left:34.5px;top:11px">重置</span></div>
  </div>
</div>


<!-- ================= IME TOOLBAR (Sogou) ================= -->
<div class="abs" style="left:1688px;top:893px;width:200px;height:31px;background:#fff;border-top:1px solid #6f6f6f;border-bottom:1px solid #6f6f6f"></div>
<div class="abs" style="left:1663px;top:892px;width:31px;height:30px;background:linear-gradient(#f4692a,#ee4f12);border-radius:4px;transform:rotate(-13deg)"></div>
<div class="abs" style="left:1666px;top:886px;width:26px;height:40px;color:#fff;font-size:37px;font-weight:bold;font-style:italic;transform:rotate(-13deg) scaleX(1.250);line-height:40px;text-align:center;font-family:'Liberation Sans',sans-serif">s</div>
<div class="abs" style="left:1702px;top:901.5px;font-size:18px;font-weight:900;color:#2878c8">英</div>
<svg class="abs" style="left:1732px;top:902px" width="16" height="16" viewBox="0 0 16 16"><circle cx="3.700" cy="3.800" r="2" fill="#2878c8"/><path d="M10.500 8.200h2.600c.2 2.600-.8 4-2.800 4.600l-.4-1c1-.5 1.300-1 1.200-1.600h-.6z" fill="#2878c8"/></svg>
<svg class="abs" style="left:1755px;top:899px" width="21" height="21" viewBox="0 0 21 21"><circle cx="10.500" cy="10.500" r="9" fill="none" stroke="#2878c8" stroke-width="2"/><path d="M7.400 6.500v3M13.600 6.500v3" stroke="#2878c8" stroke-width="1.800"/><path d="M6 12.500c2 3.300 7 3.300 9 0" fill="none" stroke="#2878c8" stroke-width="1.700"/></svg>
<svg class="abs" style="left:1785px;top:899px" width="16" height="21" viewBox="0 0 16 21"><rect x="4.600" y=".5" width="6.800" height="12" rx="3.400" fill="#2878c8"/><path d="M1.200 8.500c0 9 13.600 9 13.600 0M8 15.500v3.500M4.500 19.800h7" fill="none" stroke="#2878c8" stroke-width="1.800"/></svg>
<svg class="abs" style="left:1810px;top:902px" width="20" height="15" viewBox="0 0 20 15"><rect width="20" height="15" rx="1.800" fill="#2878c8"/><path d="M2.500 3.200h2M6 3.200h2M9.500 3.200h2M13 3.200h2M16 3.200h1.500M2.500 6.200h2M6 6.200h2M9.500 6.200h2M13 6.200h2M16 6.200h1.500M2.500 9.200h2M6 9.200h8M16 9.200h1.500" stroke="#fff" stroke-width="1.500"/><path d="M2.500 12.200h15" stroke="#fff" stroke-width="1.300"/></svg>
<svg class="abs" style="left:1839px;top:900px" width="22" height="20" viewBox="0 0 22 20"><circle cx="7.500" cy="4" r="3.300" fill="#c3c8d6"/><path d="M1 17c0-5 2.500-8.500 6.500-8.500 1.500 0 2.500.5 3 1.500H6v7z" fill="#c3c8d6"/><path d="M6.500 10.500h14.500M6.500 14h14.500M6.500 17.500h14.500M6.500 10.500v7M12 10.500v7" fill="none" stroke="#c3c8d6" stroke-width="1.100"/></svg>
<svg class="abs" style="left:1865px;top:901px" width="18" height="17" viewBox="0 0 18 17"><path d="M5.500 .5c1 1.600 6 1.600 7 0l5 3.300-2.300 3.700-1.700-1V16.500H4.500V6.500l-1.700 1L.5 3.800z" fill="#2878c8"/></svg>
<div class="abs" style="left:1854px;top:954px;width:34px;height:14px;background:#fff"></div>
<div class="abs" style="left:1859px;top:957px;width:3px;height:3px;border-radius:2px;background:#ccc;box-shadow:0 6px 0 #ccc"></div>
<div class="abs" style="left:1871px;top:960px;width:22px;height:20px;background:#f2601e;border-radius:3px;transform:rotate(-13deg)"></div>
</body>
</html>
